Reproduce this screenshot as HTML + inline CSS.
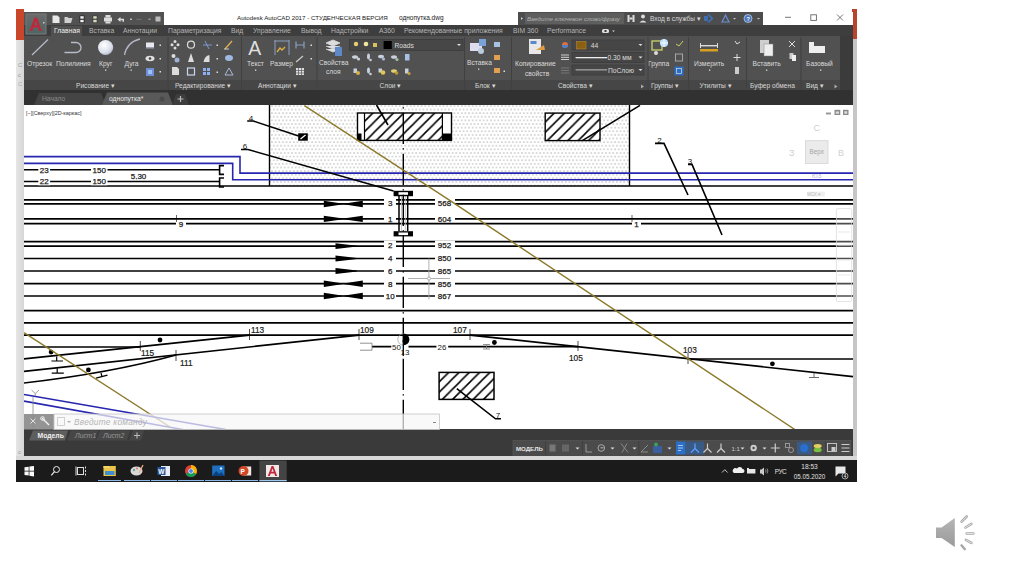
<!DOCTYPE html>
<html><head><meta charset="utf-8">
<style>
*{margin:0;padding:0;box-sizing:border-box}
html,body{width:1024px;height:574px;overflow:hidden;background:#fff;font-family:"Liberation Sans",sans-serif}
.a{position:absolute}
.t{position:absolute;white-space:nowrap;line-height:1}
.rt{position:absolute;white-space:nowrap;line-height:1;font-size:6.7px;color:#e6e6e6}
.tab{position:absolute;white-space:nowrap;line-height:1;font-size:6.8px;color:#b4b4b4;top:28px}
.pl{position:absolute;white-space:nowrap;line-height:1;font-size:6.6px;color:#dcdcdc;top:82px}
.sep{position:absolute;top:37px;width:1px;height:43px;background:#3c3c3c}
.dd{position:absolute;width:0;height:0;border-left:2px solid transparent;border-right:2px solid transparent;border-top:2px solid #ddd}
</style></head><body>
<!-- left slide strip -->
<div class="a" style="left:16px;top:39px;width:8px;height:421px;background:linear-gradient(90deg,#e6e6e6,#d6d6d6)"></div>
<div class="a" style="left:16px;top:9px;width:8px;height:31px;background:#c9462a"></div>
<div class="t" style="left:18px;top:62px;font-size:6px;color:#9a9a9a">С</div>
<div class="t" style="left:18px;top:72px;font-size:6px;color:#9a9a9a">с</div>
<div class="t" style="left:18px;top:81px;font-size:6px;color:#aaaaaa">С</div>
<div class="t" style="left:18px;top:449px;font-size:6px;color:#9a9a9a">с</div>
<div class="a" style="left:852px;top:9px;width:5px;height:31px;background:#b8442c"></div>
<div class="a" style="left:852px;top:39px;width:5px;height:421px;background:#c6c6c6"></div>

<!-- title row -->
<div class="a" style="left:24px;top:12px;width:829px;height:13px;background:#fff"></div>
<div class="a" style="left:24px;top:12px;width:140px;height:13px;background:#525252"></div>
<div class="a" style="left:518px;top:12px;width:245px;height:13px;background:#4d4d4d"></div>
<div class="a" style="left:525px;top:13px;width:99px;height:11px;background:#5e5e5e"></div>
<div class="t" style="left:237px;top:15px;font-size:6.2px;color:#1a1a1a">Autodesk AutoCAD 2017 - СТУДЕНЧЕСКАЯ ВЕРСИЯ</div>
<div class="t" style="left:399px;top:15px;font-size:6.5px;color:#1a1a1a">однопутка.dwg</div>
<!-- tab row -->
<div class="a" style="left:24px;top:25px;width:829px;height:11px;background:#3e3e3e"></div>
<div class="a" style="left:51px;top:26px;width:31px;height:10px;background:#505050"></div>
<div class="tab" style="left:54px;color:#eee">Главная</div>
<div class="tab" style="left:89px">Вставка</div>
<div class="tab" style="left:123px">Аннотации</div>
<div class="tab" style="left:168px">Параметризация</div>
<div class="tab" style="left:231px">Вид</div>
<div class="tab" style="left:253px">Управление</div>
<div class="tab" style="left:301px">Вывод</div>
<div class="tab" style="left:331px">Надстройки</div>
<div class="tab" style="left:379px">A360</div>
<div class="tab" style="left:404px">Рекомендованные приложения</div>
<div class="tab" style="left:513px">BIM 360</div>
<div class="tab" style="left:547px">Performance</div>
<!-- ribbon -->
<div class="a" style="left:24px;top:36px;width:816px;height:44px;background:#515151"></div>
<div class="a" style="left:24px;top:80px;width:816px;height:10px;background:#464646"></div>
<div class="a" style="left:840px;top:36px;width:13px;height:54px;background:#3b3b3b"></div>
<!-- file tabs -->
<div class="a" style="left:24px;top:90px;width:829px;height:15px;background:#313131"></div>
<svg class="a" style="left:0;top:0" width="1024" height="110" viewBox="0 0 1024 110">
<defs>
<radialGradient id="circg" cx="0.4" cy="0.35" r="0.7"><stop offset="0" stop-color="#ffffff"/><stop offset="0.7" stop-color="#d8dde8"/><stop offset="1" stop-color="#a9b0c0"/></radialGradient>
<linearGradient id="appbtn" x1="0" y1="0" x2="0" y2="1"><stop offset="0" stop-color="#6b6b6b"/><stop offset="1" stop-color="#4d6664"/></linearGradient>
</defs>
<!-- app button -->
<rect x="26" y="14" width="20" height="20" fill="url(#appbtn)" stroke="#7a7a7a" stroke-width="1"/>
<path d="M29.5,31 L34.5,17.5 L37,17.5 L42,31 L39.2,31 L38,27.5 L33.5,27.5 L32.3,31Z M34.3,25.3 L37.2,25.3 L35.75,21Z" fill="#c0283a"/>
<rect x="43" y="22" width="1.5" height="1.5" fill="#ccc"/>
<!-- QAT icons -->
<g fill="#e8e8e8">
<path d="M52.5,15.5 h5 l2,2 v5.5 h-7z"/>
<path d="M64.5,17 h3 l1,1 h4 l-1.5,5 h-6.5z" fill="#cfcfcf"/>
<rect x="79.5" y="15.5" width="5" height="7.5" fill="#222"/><rect x="80.3" y="16.2" width="3.4" height="2.5" fill="#eee"/><rect x="80.3" y="19.8" width="3.4" height="2.5" fill="#eee"/>
<rect x="92.5" y="15.5" width="5" height="7.5" fill="#3a3a3a"/><rect x="93.3" y="16.2" width="3.4" height="2.5" fill="#d9dcc0"/><rect x="93.3" y="19.8" width="3.4" height="2.5" fill="#d9dcc0"/>
<path d="M104,17.5 h8 v4 h-8z" fill="#ddd"/><rect x="105.5" y="15" width="5" height="2.5" fill="#ddd"/><rect x="105.5" y="21.5" width="5" height="2" fill="#ddd"/>
<path d="M117.5,19.5 l3,-2.5 v1.8 h3.5 v3 h-1.5 v-1.5 h-2 v1.7z" fill="#ddd"/>
<rect x="130" y="18.5" width="2" height="1.5" fill="#bbb"/>
<rect x="136.5" y="18.8" width="5" height="1" fill="#777"/>
<rect x="148.5" y="18.5" width="2" height="1.5" fill="#999"/>
<rect x="155.5" y="16.5" width="5" height="5" fill="#bbb"/>
</g>
<!-- infocenter -->
<path d="M521,17 l2,1.5 l-2,1.5z" fill="#ccc"/>
<text x="527" y="20.8" font-family="Liberation Sans" font-size="6.2" font-style="italic" fill="#b0b0b0">Введите ключевое слово/фразу</text>
<g fill="#ddd"><rect x="627.5" y="15" width="2" height="7"/><rect x="632.5" y="15" width="2" height="7"/><rect x="629.5" y="17.5" width="3" height="2"/></g>
<circle cx="643" cy="16.5" r="2" fill="#ddd"/><path d="M639.5,22.5 q3.5,-4 7,0z" fill="#ddd"/>
<text x="650" y="21" font-family="Liberation Sans" font-size="6.5" fill="#d8d8d8">Вход в службы ▾</text>
<path d="M707,14.5 l4,4 l-4,4 h2.5 l4,-4 l-4,-4z" fill="#3f6fb0"/><rect x="704" y="16" width="4" height="5" fill="#3f6fb0"/>
<path d="M722,22 l3.5,-7 l3.5,7z" fill="none" stroke="#6a8fd0" stroke-width="1.2"/>
<path d="M733,18 l1.5,1.5 l1.5,-1.5z" fill="#ccc"/>
<circle cx="748" cy="18.5" r="4" fill="#4a78c0" stroke="#bcd" stroke-width="0.8"/><text x="746.5" y="21" font-family="Liberation Sans" font-size="5.5" font-weight="bold" fill="#fff">?</text>
<path d="M757,18 l1.5,1.5 l1.5,-1.5z" fill="#ccc"/>
<!-- window controls -->
<g stroke="#666" stroke-width="0.9" fill="none">
<line x1="785" y1="17.3" x2="791" y2="17.3"/>
<rect x="810.8" y="14.8" width="5.6" height="5.6"/>
<line x1="837" y1="14.5" x2="843" y2="20.5"/><line x1="843" y1="14.5" x2="837" y2="20.5"/>
</g>
<!-- performance icon -->
<rect x="602" y="29" width="7" height="4" rx="1.5" fill="#ddd"/><rect x="604.5" y="30" width="2" height="2" fill="#3c3c3c"/>
<path d="M612,30.5 l1.5,1.5 l1.5,-1.5z" fill="#ccc"/>

<!-- ===== Рисование ===== -->
<line x1="32" y1="55" x2="48" y2="39.5" stroke="#b8bccb" stroke-width="1.2"/>
<path d="M64.5,52.5 L76,52.5 A5,5 0 0 0 76,42.5 L71,42.5" fill="none" stroke="#b8bccb" stroke-width="1.3"/>
<circle cx="105.6" cy="47.5" r="7.6" fill="url(#circg)"/>
<path d="M124.5,55 Q127,42 140,39" fill="none" stroke="#b5b6c8" stroke-width="1.3"/>
<g font-family="Liberation Sans" font-size="6.7" fill="#dadada">
<text x="27" y="66">Отрезок</text><text x="56" y="66">Полилиния</text><text x="99" y="66">Круг</text><text x="124.5" y="66">Дуга</text>
<text x="247" y="66">Текст</text><text x="270" y="66">Размер</text>
<text x="319" y="65">Свойства</text><text x="326" y="74">слоя</text>
<text x="467" y="64.5">Вставка</text>
<text x="515" y="66">Копирование</text><text x="525" y="75.5">свойств</text>
<text x="648" y="66">Группа</text>
<text x="694" y="66">Измерить</text>
<text x="752.5" y="66">Вставить</text>
<text x="806" y="66">Базовый</text>
</g>
<g fill="#ddd">
<rect x="105" y="69.5" width="1.3" height="1.3"/><rect x="130.5" y="69.5" width="1.3" height="1.3"/>
<rect x="255" y="69.5" width="1.3" height="1.3"/><rect x="478" y="68.5" width="1.3" height="1.3"/>
<rect x="709" y="69.5" width="1.3" height="1.3"/><rect x="766" y="69.5" width="1.3" height="1.3"/><rect x="820" y="69.5" width="1.3" height="1.3"/>
</g>
<!-- panel labels -->
<g font-family="Liberation Sans" font-size="6.6" fill="#d8d8d8">
<text x="76" y="87.6">Рисование ▾</text>
<text x="175" y="87.6">Редактирование ▾</text>
<text x="258" y="87.6">Аннотации ▾</text>
<text x="379.5" y="87.6">Слои ▾</text>
<text x="475" y="87.6">Блок ▾</text>
<text x="558" y="87.6">Свойства ▾</text>
<text x="651" y="87.6">Группы ▾</text>
<text x="699.5" y="87.6">Утилиты ▾</text>
<text x="750" y="87.6">Буфер обмена</text>
<text x="806" y="87.6">Вид ▾</text>
</g>
<path d="M641,84.5 l3,2 l-3,2z" fill="#aaa"/><path d="M834.5,84.5 l3,2 l-3,2z" fill="#aaa"/>
<!-- separators -->
<g fill="#404040">
<rect x="167.5" y="37" width="1" height="53"/><rect x="241" y="37" width="1" height="53"/><rect x="316.5" y="37" width="1" height="53"/>
<rect x="464" y="37" width="1" height="53"/><rect x="511" y="37" width="1" height="53"/><rect x="647.5" y="37" width="1" height="53"/>
<rect x="688" y="37" width="1" height="53"/><rect x="746" y="37" width="1" height="53"/><rect x="800.5" y="37" width="1" height="53"/>
</g>
<!-- small draw icons -->
<rect x="146" y="42.5" width="8" height="5" fill="#e8e8f0"/><rect x="146" y="47.5" width="8" height="1" fill="#9ab"/>
<ellipse cx="150" cy="58.5" rx="4.5" ry="2.8" fill="#e0e0e0"/><circle cx="150" cy="58.5" r="1.3" fill="#444"/>
<rect x="146" y="68" width="8" height="8" fill="#6f8fd0"/><rect x="148" y="70" width="4" height="4" fill="#9fc0ff"/>
<g fill="#ddd"><rect x="159.5" y="44.5" width="1.5" height="1.5"/><rect x="159.5" y="58" width="1.5" height="1.5"/><rect x="159.5" y="71" width="1.5" height="1.5"/></g>
<!-- modify icons -->
<g fill="#dcdcdc">
<circle cx="175" cy="41.5" r="1.5"/><circle cx="172" cy="44.7" r="1.5"/><circle cx="178" cy="44.7" r="1.5"/><circle cx="175" cy="48" r="1.5"/>
<circle cx="191" cy="44.7" r="3.5" fill="none" stroke="#dcdcdc" stroke-width="1.2"/>
<path d="M203,45 h9" stroke="#7a9ad0" stroke-width="1"/><path d="M205,41 l4,8" stroke="#7a9ad0" stroke-width="1"/>
<path d="M225,49 l7,-8" stroke="#e0b050" stroke-width="1.4"/><path d="M224,49 h5" stroke="#ccc" stroke-width="1"/>
<circle cx="173.5" cy="56" r="2"/><circle cx="177" cy="60" r="2.5" fill="#9fb0d0"/>
<path d="M191,53 l-3,9 h6z"/>
<path d="M203.5,62 q1,-6 6,-7 v7z"/>
<ellipse cx="229" cy="58" rx="4" ry="3" fill="#9fb8e0"/>
<path d="M172,67 h5 l2,2 v6 h-7z"/><rect x="187.5" y="68" width="7" height="7" fill="none" stroke="#c8d8f0" stroke-width="1.2"/>
<rect x="203" y="68" width="3" height="3" fill="#8fb0f0"/><rect x="207" y="68" width="3" height="3" fill="#8fb0f0"/><rect x="203" y="72" width="3" height="3" fill="#8fb0f0"/><rect x="207" y="72" width="3" height="3" fill="#8fb0f0"/>
<path d="M225,75 l4,-7 l4,7z" fill="none" stroke="#aab8d8" stroke-width="1"/>
<rect x="216.5" y="44.5" width="1.5" height="1.5"/><rect x="216.5" y="58" width="1.5" height="1.5"/><rect x="216.5" y="71.5" width="1.5" height="1.5"/>
</g>
<!-- annotation -->
<text x="248.2" y="54.9" font-family="Liberation Sans" font-size="19.5" fill="#dedede">A</text>
<rect x="274.5" y="40" width="1" height="15" fill="#8aa0c0"/><rect x="288.5" y="40" width="1" height="15" fill="#8aa0c0"/><rect x="274.5" y="40.5" width="15" height="1" fill="#8aa0c0"/>
<path d="M277,52 l3,-4 l2,2 l3,-3" stroke="#e0b040" stroke-width="1.3" fill="none"/>
<path d="M296,41.5 v7 M304,41.5 v7 M296,45 h8" stroke="#8aa0c0" stroke-width="1.2" fill="none"/>
<path d="M296,62 l7,-6" stroke="#ccc" stroke-width="1.2"/>
<rect x="296" y="68" width="8" height="7" fill="#ddd"/><path d="M296,70.5 h8 M296,73 h8 M298.5,68 v7 M301.5,68 v7" stroke="#4a4a4a" stroke-width="0.6"/>
<g fill="#ddd"><rect x="310.5" y="44.5" width="1.5" height="1.5"/><rect x="310.5" y="58" width="1.5" height="1.5"/></g>
<!-- layers -->
<path d="M326,43 l7,-3 l7,3 l-7,3z M326,46 l7,3 l7,-3 M326,49 l7,3 l7,-3" fill="#ddd" stroke="#ddd" stroke-width="0.8"/>
<rect x="335" y="47" width="7" height="9" fill="#5e88c8"/>
<rect x="349.5" y="39.5" width="113.5" height="11" fill="#474747" stroke="#3c3c3c" stroke-width="0.8"/>
<circle cx="356" cy="44" r="2.2" fill="#e8d070"/><circle cx="366" cy="44" r="2.3" fill="#f0e8a0"/><rect x="373" y="43" width="4" height="4" fill="#d8c060"/>
<rect x="383.6" y="41" width="8.2" height="8" fill="#000"/>
<text x="394.5" y="47.5" font-family="Liberation Sans" font-size="6.7" fill="#ddd">Roads</text>
<path d="M457,44 l2,2 l2,-2z" fill="#ddd"/>
<g fill="#c8d0dc">
<ellipse cx="355" cy="57" rx="3" ry="1.8"/><circle cx="358.5" cy="59" r="1.6"/>
<ellipse cx="368.5" cy="56.5" rx="1.5" ry="3"/><circle cx="370.5" cy="60" r="1.3"/>
<ellipse cx="381" cy="56.5" rx="3" ry="1.8"/><circle cx="383.5" cy="59" r="1.6" fill="#a8b8e0"/>
<ellipse cx="394" cy="57" rx="3" ry="1.8"/><circle cx="397" cy="59.5" r="1.6" fill="#a0c0a0"/>
<rect x="405" y="54" width="4.5" height="6.5" fill="#a8c0e8"/>
<rect x="353.5" y="68.5" width="3.5" height="4.5"/><circle cx="358" cy="73" r="2" fill="#d8b040"/>
<ellipse cx="368.5" cy="70.5" rx="1.5" ry="3"/><circle cx="370.5" cy="74" r="1.3"/>
<rect x="378.5" y="68.5" width="3.5" height="4"/><circle cx="383" cy="72.5" r="2.3" fill="#e0c850"/>
<ellipse cx="394" cy="71" rx="3" ry="1.8" fill="#e0d070"/><circle cx="396.5" cy="73" r="1.8" fill="#c09a30"/>
<rect x="405" y="68.5" width="3.5" height="5"/><circle cx="409" cy="73.5" r="1.6" fill="#c8a040"/>
</g>
<!-- block -->
<rect x="470" y="43" width="12" height="8" fill="#dde" /><rect x="479" y="39" width="7" height="7" fill="#7aa0d8"/><circle cx="481" cy="51" r="3" fill="#bcd"/>
<g fill="#aac0e0"><rect x="494" y="42" width="6" height="5"/><rect x="494" y="55" width="6" height="5" fill="#e0a050"/><rect x="494" y="68" width="6" height="5" fill="#e0a050"/></g>
<rect x="503.5" y="70.5" width="1.5" height="1.5" fill="#ddd"/>
<!-- properties -->
<rect x="529" y="39" width="12" height="15" fill="#e8e8e8"/><rect x="530.5" y="41" width="6" height="3" fill="#5a88c8"/><path d="M536,50 l8,-5 l1,5z" fill="#e09a40"/>
<circle cx="565" cy="45" r="3" fill="#e07040"/><path d="M562,45 a3,3 0 0 0 6,0z" fill="#4a80d0"/>
<g fill="#464646" stroke="#3c3c3c" stroke-width="0.8">
<rect x="572" y="40" width="72" height="10"/><rect x="572" y="52.5" width="72" height="10"/><rect x="572" y="65" width="72" height="10"/>
</g>
<rect x="576.6" y="41.5" width="9.4" height="7.5" fill="#8b6010" stroke="#c09040" stroke-width="0.5"/>
<g font-family="Liberation Sans" font-size="6.7" fill="#ddd"><text x="590.7" y="47.8">44</text><text x="607.5" y="60.2">0.30 мм</text><text x="608" y="72.7">ПоСлою</text></g>
<rect x="575.6" y="57" width="31.5" height="1.3" fill="#eee"/><rect x="575.6" y="69.5" width="31.5" height="0.8" fill="#ddd"/>
<g fill="#ddd"><path d="M638.5,44 l2,2 l2,-2z"/><path d="M638.5,56.5 l2,2 l2,-2z"/><path d="M638.5,69 l2,2 l2,-2z"/></g>
<g fill="#cfcfcf"><rect x="561" y="54.5" width="8" height="1"/><rect x="561" y="56.8" width="8" height="1"/><rect x="561" y="59" width="8" height="1"/></g>
<g fill="#777"><rect x="561" y="67.5" width="8" height="1"/><rect x="561" y="70" width="8" height="1"/><rect x="561" y="72.5" width="8" height="1"/></g>
<!-- groups -->
<rect x="652" y="41" width="10" height="9" fill="none" stroke="#cbd36a" stroke-width="1.3"/><circle cx="664" cy="43" r="4" fill="#bfe0ff"/><path d="M660,43 h8 M664,39 v8" stroke="#fff" stroke-width="0.8"/><circle cx="656" cy="53" r="2" fill="#ddd"/>
<path d="M676,44 l3,2 l4,-5" stroke="#c8d060" stroke-width="1" fill="none"/>
<rect x="675.5" y="54" width="7" height="7" fill="none" stroke="#bbb" stroke-width="0.8"/>
<rect x="674.5" y="66.5" width="9" height="9" fill="#2d6ec0"/><rect x="676.5" y="68.5" width="5" height="5" fill="none" stroke="#cde" stroke-width="0.7"/>
<!-- utilities -->
<rect x="700" y="45" width="18" height="1.4" fill="#ddd"/><rect x="700" y="43" width="1" height="5" fill="#ddd"/><rect x="717" y="43" width="1" height="5" fill="#ddd"/><rect x="700" y="49" width="18" height="2.5" fill="#d8a020"/>
<path d="M735,41 l2,3 l3,-2" stroke="#ddd" stroke-width="1" fill="none"/><path d="M737,54 v7 M733.5,57.5 h7" stroke="#ddd" stroke-width="1"/><rect x="735" y="67" width="4" height="7" fill="#ccc"/>
<!-- clipboard -->
<rect x="760" y="40" width="9" height="13" fill="#cfcfcf"/><rect x="764" y="44" width="9" height="12" fill="#eee" stroke="#888" stroke-width="0.5"/>
<path d="M789,41 l6,6 M795,41 l-6,6" stroke="#ddd" stroke-width="1"/><rect x="789.5" y="53" width="4" height="6" fill="#ccc"/><rect x="792" y="55" width="4" height="6" fill="#eee"/>
<!-- view -->
<path d="M809,42 h5 v4 h11 v7 h-16z" fill="#eeeeee"/>
<!-- file tabs -->
<path d="M34,105 L39,93 L101,93 L106,105Z" fill="#454545"/>
<path d="M102,105 L107,92.5 L168,92.5 L173,105Z" fill="#595959"/>
<path d="M172,105 L176,94 L185,94 L189,105Z" fill="#3d3d3d"/>
<g font-family="Liberation Sans" font-size="6.7"><text x="42" y="101" fill="#8a8a8a">Начало</text><text x="109" y="101" fill="#e8e8e8">однопутка*</text></g>
<circle cx="162" cy="99" r="2.5" fill="#4a4a4a"/>
<path d="M180.5,96 v6 M177.5,99 h6" stroke="#bbb" stroke-width="1.2"/>
</svg>

<!-- drawing -->
<svg class="a" style="left:24px;top:105px" width="829" height="324" viewBox="24 105 829 324">
<defs>
<pattern id="dots" x="0" y="0.9" width="3.65" height="7.24" patternUnits="userSpaceOnUse"><rect x="-0.7" y="-0.5" width="1.5" height="1.1" fill="#b0b0b0"/><rect x="2.95" y="-0.5" width="1.5" height="1.1" fill="#b0b0b0"/><rect x="-0.7" y="6.74" width="1.5" height="1.1" fill="#b0b0b0"/><rect x="2.95" y="6.74" width="1.5" height="1.1" fill="#b0b0b0"/><rect x="1.1" y="3.12" width="1.5" height="1.1" fill="#b0b0b0"/></pattern>
<pattern id="h1" x="1.8" y="0" width="10.3" height="10.3" patternUnits="userSpaceOnUse"><path d="M-1,1 L1,-1 M0,10.3 L10.3,0 M9.3,11.3 L11.3,9.3" stroke="#000" stroke-width="1.55"/></pattern>
<pattern id="h2" x="8.1" y="0" width="10.3" height="10.3" patternUnits="userSpaceOnUse"><path d="M-1,1 L1,-1 M0,10.3 L10.3,0 M9.3,11.3 L11.3,9.3" stroke="#000" stroke-width="1.55"/></pattern>
<pattern id="h7" x="7.4" y="0" width="10.3" height="10.3" patternUnits="userSpaceOnUse"><path d="M-1,1 L1,-1 M0,10.3 L10.3,0 M9.3,11.3 L11.3,9.3" stroke="#000" stroke-width="1.55"/></pattern>

<clipPath id="r1"><rect x="364.5" y="113" width="78" height="27.4"/></clipPath>
</defs>
<rect x="24" y="105" width="829" height="324" fill="#fff"/>
<!-- platform dotted -->
<rect x="269.5" y="105" width="360" height="81" fill="url(#dots)"/>
<!-- hatched rects -->
<rect x="357.5" y="113" width="94" height="27.4" fill="#fff"/>
<rect x="545.2" y="113.1" width="54.8" height="27.5" fill="#fff"/>
<rect x="364.5" y="113" width="78" height="27.4" fill="url(#h1)"/>
<rect x="357.5" y="113" width="94" height="27.4" fill="none" stroke="#000" stroke-width="1.4"/>
<line x1="364.5" y1="113" x2="364.5" y2="140.4" stroke="#000" stroke-width="1.2"/>
<line x1="442.4" y1="113" x2="442.4" y2="140.4" stroke="#000" stroke-width="1.2"/>
<rect x="357.5" y="133.5" width="4" height="7" fill="#000"/>
<rect x="442.4" y="133.5" width="9.1" height="7" fill="#000"/>
<rect x="545.2" y="113.1" width="54.8" height="27.5" fill="url(#h2)"/>
<rect x="545.2" y="113.1" width="54.8" height="27.5" fill="none" stroke="#000" stroke-width="1.4"/>
<!-- platform edges -->
<line x1="269.5" y1="105" x2="269.5" y2="186" stroke="#000" stroke-width="1.4"/>
<line x1="629.5" y1="105" x2="629.5" y2="186" stroke="#000" stroke-width="1.4"/>
<!-- blue lines top -->
<polyline points="24,156.6 240,156.6 240,173.1 853,173.1" fill="none" stroke="#2626b0" stroke-width="1.6"/>
<polyline points="24,163.4 232.7,163.4 232.7,179.8 853,179.8" fill="none" stroke="#2626b0" stroke-width="1.6"/>
<!-- tracks 23/22 -->
<g stroke="#000" stroke-width="1.6" fill="none">
<line x1="24" y1="169.7" x2="219.6" y2="169.7"/>
<line x1="24" y1="181.5" x2="219.6" y2="181.5"/>
<polyline points="224,165.6 219.6,165.6 219.6,174.4 224,174.4"/>
<polyline points="224,178 219.6,178 219.6,187 224,187"/>
</g>
<!-- main horizontal lines -->
<g stroke="#000" stroke-width="1.7">
<line x1="24" y1="186" x2="853" y2="186"/>
<line x1="24" y1="199.9" x2="853" y2="199.9"/>
<line x1="24" y1="203.9" x2="853" y2="203.9"/>
<line x1="24" y1="218.9" x2="853" y2="218.9"/>
<line x1="24" y1="223.6" x2="853" y2="223.6"/>
<line x1="24" y1="241.7" x2="853" y2="241.7"/>
<line x1="24" y1="246.2" x2="853" y2="246.2"/>
<line x1="24" y1="258.5" x2="853" y2="258.5"/>
<line x1="24" y1="271" x2="853" y2="271"/>
<line x1="24" y1="283.7" x2="853" y2="283.7"/>
<line x1="24" y1="296" x2="853" y2="296"/>
<line x1="24" y1="310.6" x2="853" y2="310.6"/>
<line x1="24" y1="322.9" x2="853" y2="322.9"/>
<line x1="24" y1="335.1" x2="853" y2="335.1"/>
</g>
<!-- label masks -->
<g fill="#fff">
<rect x="384" y="198.6" width="12" height="8"/><rect x="435" y="198.6" width="20" height="8"/>
<rect x="384" y="214.5" width="12" height="7.5"/><rect x="435" y="214.5" width="20" height="7.5"/>
<rect x="384" y="240.6" width="12" height="8.5"/><rect x="435" y="240.6" width="20" height="8.5"/>
<rect x="384" y="254.5" width="12" height="8"/><rect x="435" y="254.5" width="20" height="8"/>
<rect x="384" y="267" width="12" height="8"/><rect x="435" y="267" width="20" height="8"/>
<rect x="384" y="279.7" width="12" height="8"/><rect x="435" y="279.7" width="20" height="8"/>
<rect x="384" y="292" width="12" height="8"/><rect x="435" y="292" width="20" height="8"/>
<rect x="176" y="220" width="10" height="7"/>
<rect x="632" y="220" width="9" height="7"/>
<rect x="38.3" y="166" width="11.8" height="7.5"/><rect x="91" y="166" width="16.5" height="7.5"/>
<rect x="38.3" y="177.8" width="11.8" height="7.5"/><rect x="91" y="177.8" width="16.5" height="7.5"/>
</g>
<!-- labels -->
<g font-family="Liberation Sans" font-size="8" fill="#1a1a1a" stroke="#1a1a1a" stroke-width="0.25" text-anchor="middle">
<text x="390.3" y="205.8">3</text><text x="444.5" y="205.8">568</text>
<text x="390.3" y="221.6">1</text><text x="444.5" y="221.6">604</text>
<text x="390.3" y="247.9">2</text><text x="444.5" y="247.9">952</text>
<text x="390.3" y="261.4">4</text><text x="444.5" y="261.4">850</text>
<text x="390.3" y="273.8">6</text><text x="444.5" y="273.8">865</text>
<text x="390.3" y="286.5">8</text><text x="444.5" y="286.5">856</text>
<text x="390.3" y="298.8">10</text><text x="444.5" y="298.8">867</text>
<text x="181" y="227.3">9</text>
<text x="636.5" y="226.5">1</text>
<text x="44.2" y="172.6">23</text><text x="99.2" y="172.6">150</text>
<text x="44.2" y="184.4">22</text><text x="99.2" y="184.4">150</text>
<text x="138.5" y="179">5.30</text>
</g>
<g stroke="#000" stroke-width="0.6">
<line x1="176.5" y1="215" x2="176.5" y2="222"/>
<line x1="632" y1="215" x2="632" y2="222"/>
</g>
<!-- bow ties and arrows -->
<g fill="#000">
<path d="M323.8,200.8 L343.3,203.7 L362.8,200.8 L362.8,207.2 L343.3,204.3 L323.8,207.2Z"/>
<path d="M323.8,215.7 L343.3,218.6 L362.8,215.7 L362.8,222.1 L343.3,219.2 L323.8,222.1Z"/>
<path d="M323.8,280.5 L343.3,283.4 L362.8,280.5 L362.8,286.9 L343.3,284 L323.8,286.9Z"/>
<path d="M323.8,292.8 L343.3,295.7 L362.8,292.8 L362.8,299.2 L343.3,296.3 L323.8,299.2Z"/>
<path d="M335.5,243.3 L357,245.8 L357,246.6 L335.5,249.1Z"/>
<path d="M335.5,255.6 L357,258.1 L357,258.9 L335.5,261.4Z"/>
<path d="M335.5,268.1 L357,270.6 L357,271.4 L335.5,273.9Z"/>
</g>
<!-- bridge -->
<g>
<line x1="401.5" y1="196" x2="401.5" y2="231" stroke="#bbb" stroke-width="0.8"/>
<line x1="405.3" y1="196" x2="405.3" y2="231" stroke="#bbb" stroke-width="0.8"/>
<line x1="399" y1="196" x2="399" y2="231" stroke="#000" stroke-width="1.5"/>
<line x1="407.7" y1="196" x2="407.7" y2="231" stroke="#000" stroke-width="1.5"/>
<rect x="393.6" y="190.8" width="19.4" height="5.4" fill="#000"/>
<rect x="398.5" y="192.2" width="9.5" height="2.6" fill="#fff"/>
<rect x="393.6" y="231.2" width="19.4" height="5.2" fill="#000"/>
<rect x="398.5" y="232.5" width="9.5" height="2.6" fill="#fff"/>
</g>
<!-- center dash-dot line -->
<line x1="403.3" y1="105" x2="403.3" y2="429" stroke="#000" stroke-width="1.4" stroke-dasharray="1.3,4.3,31.1,4.3" stroke-dashoffset="38.8"/>
<!-- crosshair -->
<g stroke="#a8a8a8" stroke-width="0.9" fill="none">
<line x1="428.9" y1="258.5" x2="428.9" y2="299.5"/>
<line x1="408" y1="278.5" x2="450" y2="278.5"/>
<circle cx="429" cy="278.5" r="1.6" fill="#fff"/>
</g>
<!-- leaders -->
<g stroke="#000" stroke-width="1.6" fill="none">
<polyline points="247.2,121 253.3,121 298.6,136"/>
<polyline points="241,149.5 248,149.5 393.6,191"/>
<line x1="376.5" y1="105" x2="388" y2="125"/>
<line x1="582.3" y1="140.6" x2="640" y2="105.4"/>
<polyline points="655,143.4 664,143.4 688,195"/>
<polyline points="688,164.4 692,164.4 722,235"/>
<polyline points="456.8,388.7 495.5,418.8 501,418.8"/>
</g>
<rect x="298.2" y="133.3" width="9.6" height="7.4" fill="#000"/>
<line x1="300.5" y1="139" x2="305.5" y2="135" stroke="#fff" stroke-width="1.2"/>
<g font-family="Liberation Sans" font-size="8" fill="#111" text-anchor="middle">
<text x="251" y="120.5">4</text>
<text x="245" y="148.8">6</text>
<text x="659.5" y="142.5">2</text>
<text x="690" y="163.5">3</text>
<text x="498" y="418">7</text>
</g>
<!-- lower tracks -->
<g stroke="#000" stroke-width="1.7" fill="none">
<line x1="24" y1="347" x2="140.3" y2="347"/>
<line x1="24" y1="358.8" x2="249.5" y2="335.1"/>
<line x1="24" y1="371.3" x2="359" y2="335.1"/>
<path d="M24,383 Q111,373 176,355"/>
<line x1="470" y1="335.1" x2="853" y2="376.6"/>
<line x1="372" y1="346.7" x2="578" y2="346.7"/>
<line x1="688" y1="359" x2="853" y2="359"/>
</g>
<g stroke="#000" stroke-width="0.7">
<line x1="140.3" y1="341" x2="140.3" y2="351"/>
<line x1="176" y1="350" x2="176" y2="361"/>
<line x1="249.5" y1="329" x2="249.5" y2="340"/>
<line x1="359" y1="329" x2="359" y2="340"/>
<line x1="470" y1="329" x2="470" y2="340"/>
<line x1="578" y1="341" x2="578" y2="351"/>
<line x1="688" y1="353" x2="688" y2="364"/>
</g>
<g font-family="Liberation Sans" font-size="8.3" fill="#1a1a1a" stroke="#1a1a1a" stroke-width="0.2">
<text x="141" y="355.5">115</text>
<text x="180" y="365.5">111</text>
<text x="251" y="333">113</text>
<text x="360" y="333">109</text>
<text x="453" y="333">107</text>
<text x="569" y="361">105</text>
<text x="683" y="353">103</text>
</g>
<g fill="#000">
<circle cx="51.1" cy="352.1" r="2.4"/>
<circle cx="88.4" cy="369.9" r="2.4"/>
<circle cx="160" cy="340" r="2.4"/>
<circle cx="494.4" cy="342.5" r="2.4"/>
<circle cx="772.4" cy="363.8" r="2.4"/>
</g>
<g stroke="#000" stroke-width="1.2" fill="none">
<polyline points="56.7,356.5 56.7,361 51.4,361 63,361"/>
<polyline points="57.2,368.3 57.2,373.2 51.7,373.2 63.8,373.2"/>
<line x1="101" y1="373" x2="102" y2="376.5"/><line x1="96" y1="378.2" x2="107.5" y2="375.2"/>
</g>
<g stroke="#444" stroke-width="0.8" fill="none">
<line x1="814" y1="373" x2="814" y2="377"/><line x1="809" y1="377.5" x2="819" y2="377.5"/>
</g>
<!-- center marker -->

<g stroke="#777" stroke-width="0.8" fill="none">
<polyline points="360,343.2 372,343.2 372,350.2 360,350.2"/>
<line x1="483" y1="344.5" x2="490" y2="344.5"/><line x1="483" y1="349" x2="490" y2="349"/><line x1="486.5" y1="344.5" x2="486.5" y2="349"/>
</g>
<rect x="391.3" y="342.5" width="17.2" height="8" fill="#fff"/>
<rect x="436.4" y="342.5" width="11.8" height="8" fill="#fff"/>
<path d="M403.6,333.6 A5.8,5.8 0 0 1 403.6,345.2Z" fill="#000"/>
<path d="M403.6,333.6 A5.8,5.8 0 0 0 403.6,345.2" fill="none" stroke="#999" stroke-width="0.7"/>
<line x1="403.3" y1="340" x2="403.3" y2="356" stroke="#000" stroke-width="1.3"/>
<g font-family="Liberation Sans" font-size="8" fill="#222">
<text x="392" y="350">50</text>
<text x="400.5" y="354.5">13</text>
<text x="437.5" y="350">26</text>
</g>
<!-- hatched rect 7 -->
<rect x="439.1" y="372.4" width="54.9" height="27" fill="url(#h7)"/>
<rect x="439.1" y="372.4" width="54.9" height="27" fill="none" stroke="#000" stroke-width="1.5"/>
<!-- viewcube -->
<g font-family="Liberation Sans" fill="#cfcfcf" text-anchor="middle">
<text x="816.7" y="131" font-size="9">С</text>
<text x="791.8" y="155.5" font-size="9">З</text>
<text x="841" y="155.5" font-size="9">В</text>
</g>
<rect x="805.4" y="140.7" width="22.6" height="22.7" fill="#ebebeb" stroke="#d4d4d4" stroke-width="0.8"/>
<text x="816.7" y="154.3" font-family="Liberation Sans" font-size="6.3" fill="#a4a4a4" text-anchor="middle">Верх</text>
<text x="816.5" y="178" font-family="Liberation Sans" font-size="6" fill="#b8b8e0" text-anchor="middle">ЮЗ</text>
<rect x="807.5" y="191.6" width="17.4" height="5" fill="#f0f0f0"/>
<text x="814" y="196" font-family="Liberation Sans" font-size="4.5" fill="#c0c0c0" text-anchor="middle">МСК ▾</text>
<g>
<rect x="826" y="112.5" width="5" height="2" fill="#9a9a9a"/>
<rect x="834.5" y="109.8" width="5.8" height="5.2" fill="#8a8a8a"/><rect x="835.8" y="111.5" width="3.2" height="2.2" fill="#ddd"/>
<rect x="843" y="109.8" width="5.5" height="5.2" fill="#8a8a8a"/><rect x="844.3" y="111.3" width="2.9" height="2.4" fill="#ddd"/>
</g>
<rect x="836.4" y="208.6" width="15.3" height="93" rx="1.5" fill="#fff" fill-opacity="0.3" stroke="#dcdcdc" stroke-width="0.8"/>
<g stroke="#e2e2e2" stroke-width="0.8"><line x1="838" y1="232" x2="850" y2="232"/><line x1="838" y1="245" x2="850" y2="245"/><line x1="838" y1="260" x2="850" y2="260"/><line x1="838" y1="275" x2="850" y2="275"/></g>
<!-- olive line -->
<polyline points="304.4,105.6 449,199.9 795.5,430" fill="none" stroke="#8c7a2a" stroke-width="1.4"/>
<line x1="24" y1="332.6" x2="170" y2="427" stroke="#8c7a2a" stroke-width="1.4"/>
<!-- blue lower lines -->
<line x1="24" y1="394.5" x2="226" y2="429.5" stroke="#2626b0" stroke-width="1.6"/>
<line x1="24" y1="401.1" x2="184" y2="429.7" stroke="#2626b0" stroke-width="1.6"/>
<!-- UCS -->
<g stroke="#888" stroke-width="0.8" fill="none">
<line x1="33" y1="397" x2="33" y2="429"/>
<polyline points="31.5,390 35.2,393.5 39,390"/><line x1="35.2" y1="393.5" x2="35.2" y2="396"/>
</g>
<text x="26" y="114.5" font-family="Liberation Sans" font-size="5.4" fill="#333">[−][Сверху][2D-каркас]</text>
</svg>

<!-- bottom -->
<div class="a" style="left:24px;top:429px;width:829px;height:27px;background:#3a3a3a"></div>
<svg class="a" style="left:0;top:405px" width="1024" height="80" viewBox="0 405 1024 80">
<!-- command line -->
<rect x="24" y="414" width="30" height="15.6" fill="#8b8b8b" fill-opacity="0.92"/>
<rect x="54" y="414" width="385.5" height="15.6" fill="#f7f7f7" fill-opacity="0.72" stroke="#c4c4c4" stroke-width="0.8"/>
<path d="M30.5,418.5 l5,5 M35.5,418.5 l-5,5" stroke="#e0e0e0" stroke-width="1"/>
<path d="M42,418 l3,3 l4,4" stroke="#f0f0f0" stroke-width="1.5"/><circle cx="42.5" cy="418.5" r="1.8" fill="none" stroke="#f0f0f0" stroke-width="1"/>
<rect x="57.5" y="417.5" width="7" height="8" fill="none" stroke="#c8c8c8" stroke-width="0.8"/>
<path d="M67,421 l2,2 l2,-2z" fill="#b0b0b0"/>
<text x="74" y="424.8" font-family="Liberation Sans" font-size="8.3" font-style="italic" letter-spacing="0.25" fill="#b4b4b4">Введите команду</text>
<path d="M433,422.5 h3" stroke="#888" stroke-width="1"/>
<!-- layout tabs -->
<path d="M29,440.5 L33,430.5 L68,430.5 L65,440.5Z" fill="#5e5e5e"/>
<path d="M67,440.5 L71,430.5 L98,430.5 L95,440.5Z" fill="#474747"/>
<path d="M96,440.5 L100,430.5 L130,430.5 L127,440.5Z" fill="#474747"/>
<path d="M129,440.5 L133,430.5 L144,430.5 L141,440.5Z" fill="#474747"/>
<text x="37.5" y="437.6" font-family="Liberation Sans" font-size="6.8" font-weight="bold" fill="#f0f0f0">Модель</text>
<text x="75" y="437.6" font-family="Liberation Sans" font-size="6.8" font-style="italic" fill="#9a9a9a">Лист1</text>
<text x="103" y="437.6" font-family="Liberation Sans" font-size="6.8" font-style="italic" fill="#9a9a9a">Лист2</text>
<path d="M137,432.5 v6 M134,435.5 h6" stroke="#bbb" stroke-width="1.1"/>
<!-- status bar -->
<rect x="513" y="440.5" width="338" height="15" fill="#4b4b4b" stroke="#5a5a5a" stroke-width="0.6"/>
<text x="516" y="450.6" font-family="Liberation Sans" font-size="6.1" font-weight="bold" fill="#e8e8e8">МОДЕЛЬ</text>
<g fill="#3d3d3d">
<rect x="545" y="441" width="0.8" height="14"/><rect x="582" y="441" width="0.8" height="14"/><rect x="638.5" y="441" width="0.8" height="14"/>
<rect x="750" y="441" width="0.8" height="14"/><rect x="798" y="441" width="0.8" height="14"/><rect x="825" y="441" width="0.8" height="14"/>
</g>
<rect x="549.5" y="444.5" width="6" height="7" fill="#777"/><rect x="562" y="444.5" width="7" height="7" fill="#666"/>
<g fill="#ddd"><path d="M575.5,447.5 l2,2 l2,-2z"/><path d="M610.5,447.5 l2,2 l2,-2z"/><path d="M632.5,447.5 l2,2 l2,-2z"/><path d="M667.5,447.5 l2,2 l2,-2z"/><path d="M740.5,447.5 l2,2 l2,-2z"/><path d="M762.5,447.5 l2,2 l2,-2z"/></g>
<path d="M586,444 v8 h6" stroke="#999" stroke-width="1" fill="none"/>
<circle cx="601.3" cy="448" r="3.3" fill="none" stroke="#aaa" stroke-width="1"/><rect x="600.5" y="447.2" width="3" height="1.2" fill="#aaa"/>
<path d="M621,443.5 l7,9 M627,443.5 l-5,9" stroke="#888" stroke-width="1"/>
<path d="M641,452 l7,-7 M641,452 h7" stroke="#999" stroke-width="0.8"/>
<rect x="653" y="446" width="9" height="7" fill="#3a5ea0"/><circle cx="656" cy="444.5" r="2" fill="#3aa060"/>
<rect x="676" y="441.5" width="9.5" height="13" fill="#2a6fc8"/><path d="M678,445.5 h5 M678,448 h5 M678,450.5 h3" stroke="#cde" stroke-width="0.8"/>
<rect x="686" y="441.5" width="18" height="13" fill="#385a85"/><path d="M695,443.5 v5 l-4,4 M695,448.5 l4,4" stroke="#5aa0ff" stroke-width="1.3" fill="none"/>
<path d="M707.5,443.5 v5 l-4,4 M707.5,448.5 l4,4" stroke="#ccc" stroke-width="1.2" fill="none"/>
<path d="M721,443.5 v5 l-4,4 M721,448.5 l4,4" stroke="#ccc" stroke-width="1.2" fill="none"/>
<text x="731.5" y="451" font-family="Liberation Sans" font-size="6" fill="#ccc">1:1</text>
<circle cx="753.6" cy="448" r="3.2" fill="#ccc"/><circle cx="753.6" cy="448" r="1.2" fill="#4b4b4b"/>
<path d="M775.3,443.5 v9 M770.8,448 h9" stroke="#ccc" stroke-width="1.2"/>
<rect x="785.5" y="443.5" width="4" height="4" fill="none" stroke="#aaa" stroke-width="0.8"/><circle cx="791" cy="450" r="2.5" fill="none" stroke="#aaa" stroke-width="0.8"/>
<rect x="797" y="441.5" width="15" height="13" fill="#385a85"/><circle cx="804.2" cy="448" r="4" fill="#2a6fd0"/>
<ellipse cx="817.7" cy="446" rx="4" ry="2" fill="#e0d060"/><ellipse cx="817.7" cy="450" rx="4" ry="2.2" fill="#7ac040"/>
<rect x="827.5" y="443.5" width="9" height="8" fill="none" stroke="#ccc" stroke-width="0.9"/><rect x="831.5" y="447" width="4" height="4" fill="#ccc"/>
<path d="M841.5,444.5 h8 M841.5,448 h8 M841.5,451.5 h8" stroke="#ccc" stroke-width="1.1"/>
<rect x="513" y="455.5" width="337" height="1" fill="#444"/>
</svg>

<!-- gray strip below app -->
<div class="a" style="left:16px;top:456px;width:841px;height:4px;background:#d8d8d8"></div>
<!-- taskbar -->
<div class="a" style="left:16px;top:460px;width:841px;height:22px;background:#1b1b1b"></div>
<svg class="a" style="left:0;top:458px" width="1024" height="28" viewBox="0 458 1024 28">
<!-- windows logo -->
<g fill="#fafafa"><path d="M24.5,467.3 l4.2,-0.6 v4.1 h-4.2z"/><path d="M29.4,466.6 l4.6,-0.7 v4.9 h-4.6z"/><path d="M24.5,471.5 h4.2 v4.1 l-4.2,-0.6z"/><path d="M29.4,471.5 h4.6 v4.9 l-4.6,-0.7z"/></g>
<circle cx="56.5" cy="469.5" r="3" fill="none" stroke="#eee" stroke-width="1"/><path d="M54.5,471.7 l-3.2,3.6" stroke="#eee" stroke-width="1.2"/>
<g fill="none" stroke="#ddd" stroke-width="1"><rect x="77.5" y="467.5" width="6" height="7"/><path d="M85.5,466.5 v2 M85.5,470 v2 M85.5,473.5 v2 M76,466.5 v9"/></g>
<!-- explorer -->
<rect x="103.5" y="466" width="12.3" height="10" fill="#e9c34a"/><rect x="103.5" y="466" width="6" height="2" fill="#f3d66a"/><rect x="105" y="471" width="9.5" height="4" fill="#3e8fd0"/>
<rect x="98" y="480" width="23" height="1" fill="#8bb8e8"/>
<!-- paint -->
<ellipse cx="136.5" cy="471" rx="6" ry="4.5" fill="#d8d8d8"/><circle cx="134" cy="470" r="1.2" fill="#6a9"/><circle cx="137" cy="468.5" r="1" fill="#e77"/><path d="M139,473 l4,-8" stroke="#f0b080" stroke-width="1.3"/>
<rect x="124" y="480" width="26" height="1" fill="#8bb8e8"/>
<!-- word -->
<rect x="161" y="466" width="9" height="10" fill="#e8eef8"/><rect x="157.5" y="467" width="8" height="8" fill="#2b579a"/><text x="158.3" y="473.8" font-family="Liberation Sans" font-size="6.5" font-weight="bold" fill="#fff">W</text>
<rect x="151" y="480" width="26" height="1" fill="#8bb8e8"/>
<!-- chrome -->
<circle cx="191" cy="471" r="6" fill="#db4437"/><path d="M191,471 L196.2,474 A6,6 0 0 1 185.8,474Z" fill="#0f9d58"/><path d="M191,471 L191,465 A6,6 0 0 1 196.2,474Z" fill="#f4b400"/><circle cx="191" cy="471" r="2.6" fill="#fff"/><circle cx="191" cy="471" r="2" fill="#4285f4"/>
<rect x="178" y="480" width="26" height="1" fill="#8bb8e8"/>
<!-- photos -->
<rect x="212.2" y="465.5" width="12.3" height="10.5" fill="#1e6fc0"/><path d="M212.2,476 l4,-5 l3,3 l2,-2 l3.3,4z" fill="#0a3f80"/><circle cx="221" cy="468.5" r="1.2" fill="#cfe8ff"/>
<rect x="205" y="480" width="26" height="1" fill="#8bb8e8"/>
<!-- powerpoint -->
<rect x="243" y="466.5" width="8.2" height="9" fill="#f3e5df"/><circle cx="243.5" cy="471" r="5" fill="#d24726"/><text x="240.5" y="473.5" font-family="Liberation Sans" font-size="6.5" font-weight="bold" fill="#fff">P</text>
<rect x="232" y="480" width="26" height="1" fill="#8bb8e8"/>
<!-- autocad active -->
<rect x="259.4" y="460.5" width="27.3" height="20.8" fill="#444"/>
<rect x="266" y="465" width="13" height="12" fill="#f2e8e8"/>
<path d="M267.8,476 L271.6,466 L273.4,466 L277.2,476 L275.2,476 L274.3,473.5 L270.7,473.5 L269.8,476Z M271.3,471.8 L273.7,471.8 L272.5,468.5Z" fill="#c0283a"/>
<rect x="259.4" y="480" width="27.3" height="1.2" fill="#9cc8f0"/>
<!-- tray -->
<path d="M722,472.5 l2.8,-2.8 l2.8,2.8" fill="none" stroke="#ddd" stroke-width="0.9"/>
<path d="M734,473 h8.5 a2,2 0 0 0 0,-4 a3,3 0 0 0 -5.5,-0.5 a2.2,2.2 0 0 0 -3,4.5z" fill="#f0f0f0"/>
<rect x="747" y="469" width="8.4" height="4.5" fill="#e8e8e8"/><rect x="747" y="468" width="2" height="1.5" fill="#e8e8e8"/>
<path d="M760,469.5 h1.5 l2.5,-2 v8 l-2.5,-2 h-1.5z" fill="#ccc"/><path d="M765.5,469.5 q1,1.5 0,3 M767,468.5 q1.8,2.5 0,5" stroke="#bbb" stroke-width="0.7" fill="none"/>
<text x="774.8" y="474" font-family="Liberation Sans" font-size="6.4" fill="#e0e0e0" textLength="11.8">РУС</text>
<text x="809.5" y="469" font-family="Liberation Sans" font-size="6.6" fill="#e0e0e0" text-anchor="middle">18:53</text>
<text x="809.5" y="479.3" font-family="Liberation Sans" font-size="6.3" fill="#e0e0e0" text-anchor="middle">05.05.2020</text>
<path d="M835.5,466.5 h10 v7 h-7 l-3,3z" fill="#e8e8e8"/><circle cx="845" cy="476" r="3" fill="#1b1b1b" stroke="#ddd" stroke-width="0.7"/><text x="843.8" y="478" font-family="Liberation Sans" font-size="4.5" fill="#fff">4</text>
</svg>

<!-- speaker -->
<svg class="a" style="left:930px;top:510px" width="50" height="46" viewBox="930 510 50 46">
<defs><linearGradient id="spg" x1="0" y1="0" x2="0" y2="1"><stop offset="0" stop-color="#b5b5b5"/><stop offset="1" stop-color="#9a9a9a"/></linearGradient></defs>
<path d="M936,527.6 L941.6,527.6 L954.8,517.9 L954.8,547 L941.6,538 L936,538Z" fill="url(#spg)"/>
<g stroke="#a8a8a8" stroke-width="2.6" stroke-linecap="round" fill="none">
<path d="M961.6,521.6 L966.7,516.5"/><path d="M965.5,527.5 L971.4,523.9"/><path d="M966.7,533.5 L973.3,533.5"/><path d="M965.9,539.9 L971.4,542.9"/><path d="M961.6,545.5 L964.7,549"/>
</g>
<g stroke="#e4e4e4" stroke-width="1" stroke-linecap="round" fill="none">
<path d="M961.6,521.6 L966.7,516.5"/><path d="M965.5,527.5 L971.4,523.9"/><path d="M966.7,533.5 L973.3,533.5"/><path d="M965.9,539.9 L971.4,542.9"/>
</g>
</svg>
</body></html>
